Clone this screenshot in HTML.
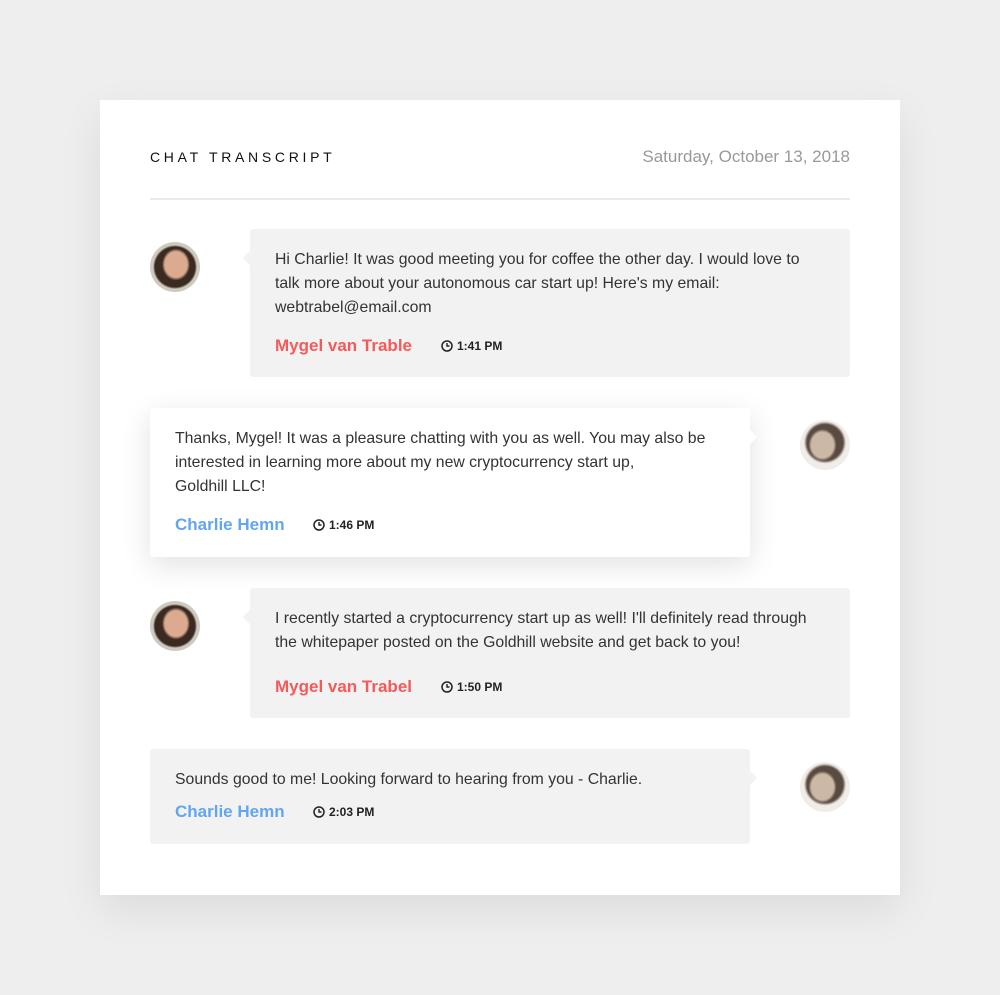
<!DOCTYPE html>
<html><head><style>
body{margin:0;width:1000px;height:995px;background:#eeeeee;font-family:"Liberation Sans",sans-serif;position:relative;overflow:hidden}
.card{position:absolute;left:100px;top:100px;width:800px;height:795px;background:#fff;box-shadow:0 15px 40px rgba(0,0,0,0.08)}
.title{position:absolute;left:150px;top:149px;font-size:14px;letter-spacing:3.7px;color:#111}
.date{position:absolute;right:150px;top:147px;font-size:17px;color:#999}
.hr{position:absolute;left:150px;top:198px;width:700px;height:2px;background:#eaeaea}
.b{position:absolute;width:600px;background:#f2f2f2;border-radius:3px;box-sizing:border-box;padding:19px 25px 0 25px;font-size:15.8px;line-height:24px;color:#333}
.b.w{background:#fff;box-shadow:0 8px 30px rgba(0,0,0,0.12)}
.b:before{content:"";position:absolute;top:24px;width:10px;height:10px;background:inherit;transform:rotate(45deg)}
.l:before{left:-5px}.r:before{right:-5px}
.meta{display:flex;align-items:center;margin-top:14px}
.n{font-weight:bold;font-size:17px;width:166px}
.red{color:#f55a5a}.blue{color:#62a6f2}
.t{font-size:12px;font-weight:bold;color:#222;display:flex;align-items:center}
.t svg{margin-right:4px}
.av{position:absolute;width:50px;height:50px;border-radius:50%;overflow:hidden}
.f{background:radial-gradient(ellipse 14px 16px at 52% 45%,#dcaa8f 0 80%,transparent 100%),radial-gradient(circle at 50% 50%,#3a2a22 0 20px,#cfcac0 22px)}
.m{background:radial-gradient(ellipse 14px 16px at 45% 50%,#cbb8a5 0 80%,transparent 100%),radial-gradient(circle at 50% 45%,#5a4b42 0 18px,#f0ece8 21px)}
</style></head><body>
<div class="card"></div>
<div class="title">CHAT TRANSCRIPT</div>
<div class="date">Saturday, October 13, 2018</div>
<div class="hr"></div>

<div class="av f" style="left:150px;top:242px"></div>
<div class="b l" style="left:250px;top:229px;height:148px">Hi Charlie! It was good meeting you for coffee the other day. I would love to talk more about your autonomous car start up! Here's my email: webtrabel@email.com
<div class="meta"><span class="n red">Mygel van Trable</span><span class="t"><svg width="12" height="12" viewBox="0 0 12 12"><circle cx="6" cy="6" r="5" fill="none" stroke="#222" stroke-width="1.5"/><path d="M6 3v3h2.5" fill="none" stroke="#222" stroke-width="1.4"/></svg>1:41 PM</span></div></div>

<div class="av m" style="left:800px;top:420px"></div>
<div class="b w r" style="left:150px;top:408px;height:149px">Thanks, Mygel! It was a pleasure chatting with you as well. You may also be interested in learning more about my new cryptocurrency start up,<br>Goldhill LLC!
<div class="meta"><span class="n blue" style="width:138px">Charlie Hemn</span><span class="t"><svg width="12" height="12" viewBox="0 0 12 12"><circle cx="6" cy="6" r="5" fill="none" stroke="#222" stroke-width="1.5"/><path d="M6 3v3h2.5" fill="none" stroke="#222" stroke-width="1.4"/></svg>1:46 PM</span></div></div>

<div class="av f" style="left:150px;top:601px"></div>
<div class="b l" style="left:250px;top:588px;height:130px">I recently started a cryptocurrency start up as well! I'll definitely read through the whitepaper posted on the Goldhill website and get back to you!
<div class="meta" style="margin-top:20px"><span class="n red">Mygel van Trabel</span><span class="t"><svg width="12" height="12" viewBox="0 0 12 12"><circle cx="6" cy="6" r="5" fill="none" stroke="#222" stroke-width="1.5"/><path d="M6 3v3h2.5" fill="none" stroke="#222" stroke-width="1.4"/></svg>1:50 PM</span></div></div>

<div class="av m" style="left:800px;top:762px"></div>
<div class="b r" style="left:150px;top:749px;height:95px">Sounds good to me! Looking forward to hearing from you - Charlie.
<div class="meta" style="margin-top:8px"><span class="n blue" style="width:138px">Charlie Hemn</span><span class="t"><svg width="12" height="12" viewBox="0 0 12 12"><circle cx="6" cy="6" r="5" fill="none" stroke="#222" stroke-width="1.5"/><path d="M6 3v3h2.5" fill="none" stroke="#222" stroke-width="1.4"/></svg>2:03 PM</span></div></div>
</body></html>
